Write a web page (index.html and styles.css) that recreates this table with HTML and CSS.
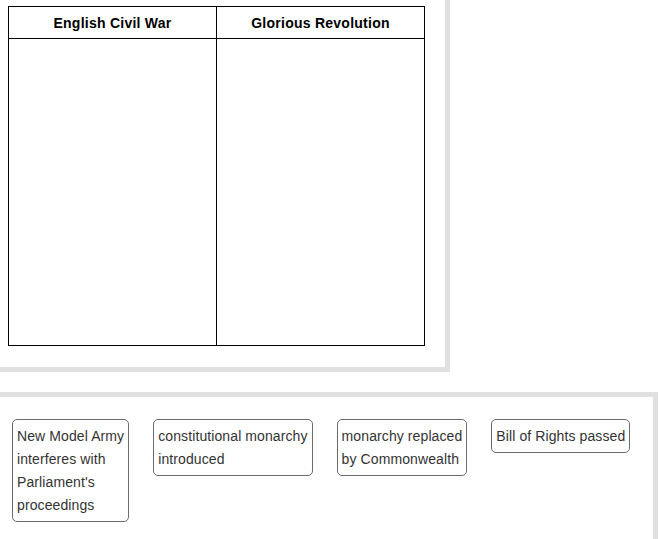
FILE: index.html
```html
<!DOCTYPE html>
<html>
<head>
<meta charset="utf-8">
<link rel="stylesheet" href="styles.css">
</head>
<body>
<div class="targets">
  <table class="grid">
    <thead>
      <tr><th>English Civil War</th><th>Glorious Revolution</th></tr>
    </thead>
    <tbody>
      <tr><td></td><td></td></tr>
    </tbody>
  </table>
</div>
<div class="bank">
  <div class="card">New Model Army<br>interferes with<br>Parliament's<br>proceedings</div>
  <div class="card">constitutional monarchy<br>introduced</div>
  <div class="card">monarchy replaced<br>by Commonwealth</div>
  <div class="card">Bill of Rights passed</div>
</div>
</body>
</html>
```
FILE: styles.css
```css
html, body {
  margin: 0;
  padding: 0;
  background: #fff;
  font-family: "Liberation Sans", Arial, sans-serif;
}
body {
  width: 659px;
  height: 539px;
  overflow: hidden;
}
.targets {
  width: fit-content;
  padding: 6px 20px 21px 8px;
  border-right: 5px solid #e0e0e0;
  border-bottom: 5px solid #e0e0e0;
}
.grid {
  border-collapse: collapse;
  width: 417px;
  table-layout: fixed;
}
.grid th, .grid td {
  border: 1px solid #000;
  padding: 0;
}
.grid th {
  height: 31px;
  font-size: 14px;
  font-weight: bold;
  letter-spacing: 0.25px;
  color: #000;
  text-align: center;
  vertical-align: middle;
}
.grid td {
  height: 306px;
}
.bank {
  margin-top: 20px;
  width: 658px;
  height: 147px;
  border-top: 5px solid #e0e0e0;
  border-right: 5px solid #e0e0e0;
  padding: 22px 0 0 12px;
  box-sizing: border-box;
  display: flex;
  align-items: flex-start;
  gap: 24px;
}
.card {
  border: 1px solid #6b6b6b;
  border-radius: 5px;
  padding: 5px 4px 4px;
  font-size: 14px;
  line-height: 23px;
  letter-spacing: 0.1px;
  color: #333;
  white-space: nowrap;
}
```
